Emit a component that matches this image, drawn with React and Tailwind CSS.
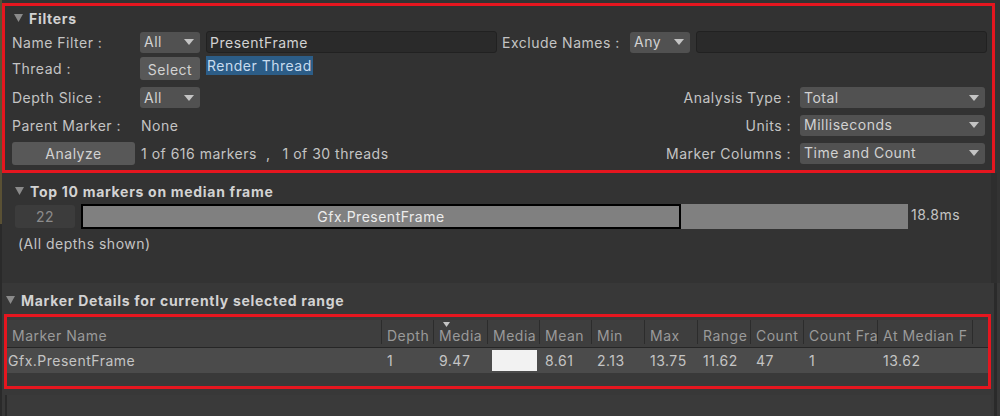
import React from 'react';

const Arrow = () => (
    <svg width="10" height="6" viewBox="0 0 10 6" className="shrink-0">
        <path d="M0 0 L10 0 L5 6 Z" fill="#c4c4c4" />
    </svg>
);

const Dropdown = ({ value, className }) => (
    <div className={`flex items-center justify-between rounded-[3px] bg-[#515151] pl-[4px] pr-[6px] text-[#d2d2d2] ${className}`}>
        <span className="leading-none">{value}</span>
        <Arrow />
    </div>
);

const TextInput = ({ value, className }) => (
    <div className={`flex items-center rounded-[3px] border border-[#212121] bg-[#2a2a2a] px-[3px] text-[#d2d2d2] ${className}`}>
        {value}
    </div>
);

const Heading = ({ children, className }) => (
    <div className={`flex items-center gap-[6px] font-bold tracking-[0.7px] text-[#d2d2d2] ${className}`}>
        <svg width="9" height="8" viewBox="0 0 9 8">
            <path d="M0 0 L9 0 L4.5 8 Z" fill="#8a8a8a" />
        </svg>
        <span>{children}</span>
    </div>
);

// visible header text is clipped in the original, so keep what shows
const columns = [
    { name: 'Marker Name', w: 'w-[375px]', value: 'Gfx.PresentFrame' },
    { name: 'Depth', w: 'w-[52px]', value: '1' },
    { name: 'Media', w: 'w-[54px]', value: '9.47', sorted: true },
    { name: 'Media', w: 'w-[52px]', bar: true },
    { name: 'Mean', w: 'w-[52px]', value: '8.61' },
    { name: 'Min', w: 'w-[53px]', value: '2.13' },
    { name: 'Max', w: 'w-[53px]', value: '13.75' },
    { name: 'Range', w: 'w-[53px]', value: '11.62' },
    { name: 'Count', w: 'w-[53px]', value: '47' },
    { name: 'Count Fra', w: 'w-[74px]', value: '1' },
    { name: 'At Median F', w: 'w-[95px]', value: '13.62' },
];

export default function App() {
    return (
        <div className="flex h-[416px] w-[1000px] overflow-hidden bg-[#333333] text-[14px] tracking-[0.5px] text-[#c4c4c4] [font-family:Inter,'Noto_Sans',sans-serif]">
            {/* left edge strip */}
            <div className="flex w-[2px] shrink-0 flex-col">
                <div className="h-[224px] bg-[#5a5134]" />
                <div className="flex-1 bg-[#2a2a2a]" />
            </div>

            <div className="flex min-w-0 flex-1 flex-col">
                {/* Filters */}
                <div className="mt-[3px] mr-[5px] h-[170px] border-[3px] border-[#e5161f] bg-[#323232] pl-[7px] pr-[5px] pt-[2px]">
                    <Heading className="h-[20px] pl-[2px]">Filters</Heading>

                    <div className="mt-[3px] flex h-[22px] items-center">
                        <div className="w-[128px]">Name Filter :</div>
                        <Dropdown value="All" className="h-[21px] w-[60px]" />
                        <TextInput value="PresentFrame" className="ml-[6px] h-[22px] w-[291px]" />
                        <div className="ml-[5px] w-[128px]">Exclude Names :</div>
                        <Dropdown value="Any" className="h-[21px] w-[60px]" />
                        <TextInput value="" className="ml-[6px] h-[22px] flex-1" />
                    </div>

                    <div className="mt-[3px] flex h-[24px] items-start">
                        <div className="w-[128px] pt-[2px]">Thread :</div>
                        <button className="mt-[1px] h-[23px] w-[60px] rounded-[3px] bg-[#585858] pt-[1px] text-[#d2d2d2]">Select</button>
                        <span className="ml-[6px] h-[19px] bg-[#2c5d87] px-[1px] leading-[19px] text-[#c8dcef]">Render Thread</span>
                    </div>

                    <div className="mt-[7px] flex h-[21px] items-center">
                        <div className="w-[128px]">Depth Slice :</div>
                        <Dropdown value="All" className="h-[21px] w-[60px]" />
                        <div className="flex-1 pr-[9px] text-right">Analysis Type :</div>
                        <Dropdown value="Total" className="mr-[2px] h-[21px] w-[185px]" />
                    </div>

                    <div className="mt-[6px] flex h-[22px] items-center">
                        <div className="w-[128px]">Parent Marker :</div>
                        <div className="pl-[1px]">None</div>
                        <div className="flex-1 pr-[9px] text-right">Units :</div>
                        <Dropdown value="Milliseconds" className="mr-[2px] h-[21px] w-[185px]" />
                    </div>

                    <div className="mt-[6px] flex h-[22px] items-center">
                        <button className="h-[23px] w-[123px] rounded-[3px] bg-[#585858] text-[#d2d2d2]">Analyze</button>
                        <div className="ml-[6px] flex">
                            <span>1 of 616 markers</span>
                            <span className="ml-[9px]">,</span>
                            <span className="ml-[12px]">1 of 30 threads</span>
                        </div>
                        <div className="flex-1 pr-[9px] text-right">Marker Columns :</div>
                        <Dropdown value="Time and Count" className="mr-[2px] h-[21px] w-[185px]" />
                    </div>
                </div>

                {/* Top 10 markers */}
                <div className="flex h-[110px]">
                    <div className="flex-1 pl-[13px] pt-[8px]">
                        <Heading className="h-[20px]">Top 10 markers on median frame</Heading>
                        <div className="mt-[3px] flex h-[25px] items-center">
                            <div className="flex h-[23px] w-[60px] items-center justify-center rounded-[3px] bg-[#3c3c3c] text-[#8c8c8c]">22</div>
                            <div className="ml-[6px] flex h-[25px] w-[827px] bg-[#808080]">
                                <div className="flex w-[600px] items-center justify-center border-2 border-black text-[#ececec]">Gfx.PresentFrame</div>
                            </div>
                            <div className="ml-[3px] -mt-[4px]">18.8ms</div>
                        </div>
                        <div className="mt-[4px] pl-[3px]">(All depths shown)</div>
                    </div>
                    <div className="w-[6px] bg-[#2e2e2e]" />
                    <div className="w-[3px]" />
                </div>

                {/* Marker details */}
                <div className="flex flex-1 bg-[#383838]">
                    <div className="flex flex-1 flex-col">
                        <Heading className="mt-[7px] h-[20px] pl-[4px]">Marker Details for currently selected range</Heading>
                        <div className="ml-[2px] mt-[4px] h-[75px] border-[3px] border-[#e5161f] bg-[#393939] pt-[3px]">
                            <div className="flex h-[28px] border-b border-[#262626] bg-[#3e3e3e]">
                                {columns.map((c, i) => (
                                    <div key={i} className={`relative flex shrink-0 items-end pb-[1px] pl-[5px] ${c.w}`}>
                                        {c.sorted && (
                                            <svg width="7" height="5" viewBox="0 0 7 5" className="absolute top-[2px] left-[9px]">
                                                <path d="M0 0 L7 0 L3.5 5 Z" fill="#c4c4c4" />
                                            </svg>
                                        )}
                                        <span className="whitespace-nowrap text-[#9a9a9a]">{c.name}</span>
                                        <div className="absolute right-0 top-0 bottom-[3px] w-px bg-[#2c2c2c]" />
                                    </div>
                                ))}
                            </div>
                            <div className="flex h-[25px] items-center bg-[#4b4b4b]">
                                {columns.map((c, i) => (
                                    <div key={i} className={`flex shrink-0 items-center ${i === 0 ? 'pl-[1px]' : i === 3 ? 'pl-[4px]' : 'pl-[5px]'} ${c.w}`}>
                                        {c.bar ? <div className="h-[21px] w-[45px] bg-[#f2f2f2]" /> : c.value}
                                    </div>
                                ))}
                            </div>
                        </div>
                        <div className="mt-[6px] flex flex-1">
                            <div className="ml-[3px] w-[2px] bg-[#2a2a2a]" />
                            <div className="flex-1 bg-[#3a3a3a]" />
                        </div>
                    </div>
                    <div className="w-[3px]" />
                    <div className="w-[3px] bg-[#2a2a2a]" />
                    <div className="w-[3px]" />
                </div>
            </div>
        </div>
    );
}
